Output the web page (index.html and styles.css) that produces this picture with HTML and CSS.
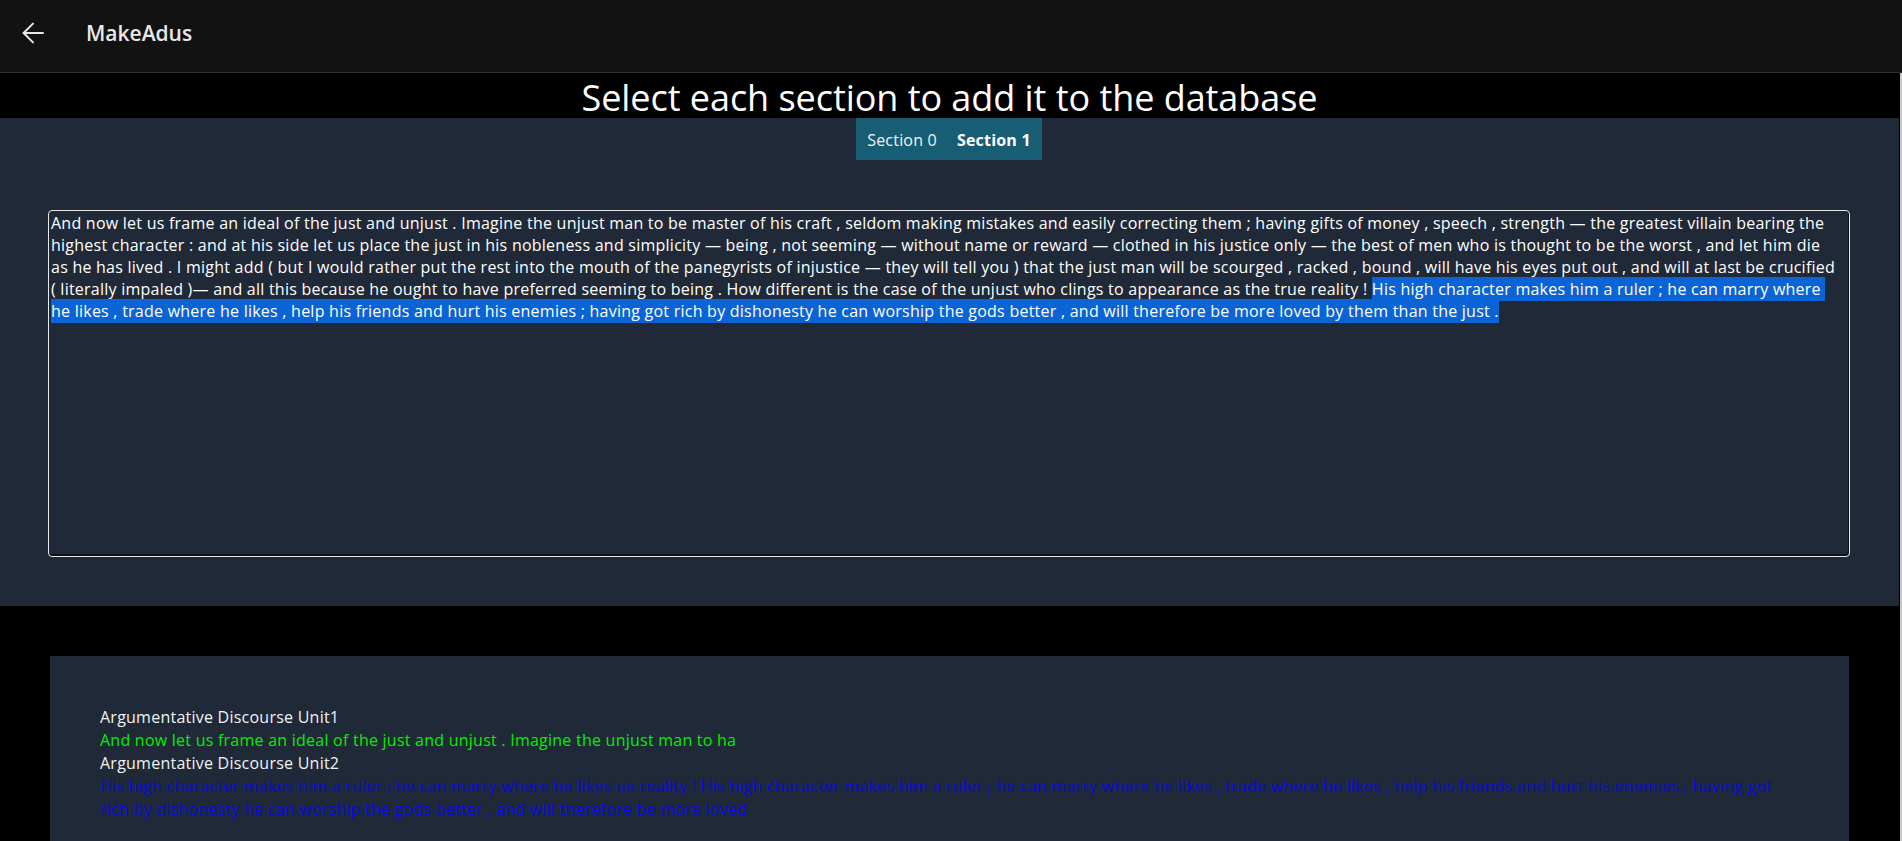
FILE: index.html
```html
<!DOCTYPE html>
<html lang="en">
<head>
<meta charset="utf-8">
<title>MakeAdus</title>
<link rel="stylesheet" href="styles.css">
</head>
<body>
<header class="topbar">
  <span class="back" aria-label="Back">
    <svg width="22" height="22" viewBox="0 0 22 22" fill="none" stroke="currentColor" stroke-width="2" stroke-linecap="round" stroke-linejoin="round"><path d="M21 11H1.6"/><path d="M11 1.6L1.6 11 11 20.4"/></svg>
  </span>
  <span class="brand">MakeAdus</span>
</header>
<div class="body-area">
  <main class="content">
    <h1 class="title">Select each section to add it to the database</h1>
    <section class="panel">
      <div class="tabs">
        <span class="tab">Section 0</span>
        <span class="tab tab-active">Section 1</span>
      </div>
      <div class="editor">And now let us frame an ideal of the just and unjust . Imagine the unjust man to be master of his craft , seldom making mistakes and easily correcting them ; having gifts of money , speech , strength — the greatest villain bearing the<br>highest character : and at his side let us place the just in his nobleness and simplicity — being , not seeming — without name or reward — clothed in his justice only — the best of men who is thought to be the worst , and let him die<br>as he has lived . I might add ( but I would rather put the rest into the mouth of the panegyrists of injustice — they will tell you ) that the just man will be scourged , racked , bound , will have his eyes put out , and will at last be crucified<br>( literally impaled )— and all this because he ought to have preferred seeming to being . How different is the case of the unjust who clings to appearance as the true reality ! <span class="sel">His high character makes him a ruler ; he can marry where&nbsp;<br>he likes , trade where he likes , help his friends and hurt his enemies ; having got rich by dishonesty he can worship the gods better , and will therefore be more loved by them than the just .</span></div>
    </section>
    <section class="units">
      <div class="unit-label">Argumentative Discourse Unit1</div>
      <div class="unit-text unit-green">And now let us frame an ideal of the just and unjust . Imagine the unjust man to ha</div>
      <div class="unit-label">Argumentative Discourse Unit2</div>
      <div class="unit-text unit-blue">His high character makes him a ruler ; he can marry where he likes ue reality ! His high character makes him a ruler ; he can marry where he likes , trade where he likes , help his friends and hurt his enemies ; having got rich by dishonesty he can worship the gods better , and will therefore be more loved</div>
    </section>
  </main>
  <div class="rail"></div>
</div>
</body>
</html>
```

FILE: styles.css
```css
* { box-sizing: border-box; }

html, body {
  margin: 0;
  height: 100%;
  overflow: hidden;
  background: #000;
  font-family: "Open Sans", "Noto Sans", sans-serif;
  color: #fff;
}

.topbar {
  height: 73px;
  background: #121212;
  border-bottom: 1px solid #2e2e2e;
  display: flex;
  align-items: center;
  padding: 0 0 6px 22px;
  color: #e6e6e6;
}

.back {
  display: flex;
  width: 22px;
  height: 22px;
  color: #e8e8e8;
}

.brand {
  margin-left: 42px;
  font-size: 21px;
  font-weight: 600;
  color: #e8e8e8;
}

.body-area {
  display: flex;
  height: calc(100% - 73px);
}

.content {
  flex: 1;
  min-width: 0;
}

.rail {
  width: 2px;
  margin-left: 1px;
  background: #c9c9c9;
}

.title {
  margin: 0;
  height: 45px;
  padding-top: 5px;
  font-size: 36px;
  line-height: 40px;
  font-weight: 400;
  text-align: center;
  color: #fff;
  letter-spacing: -0.05px;
}

.panel {
  background: #1f2937;
  padding: 0 49px 49px 48px;
}

.tabs {
  display: flex;
  justify-content: center;
  margin-bottom: 50px;
}

.tab {
  background: #175e75;
  font-size: 16px;
  line-height: 22px;
  padding: 11px 10px 9px;
  color: #f2f2f2;
  letter-spacing: 0.2px;
}

.tab:first-child { padding-left: 11px; }
.tab:last-child { padding-right: 11px; }

.tab-active { font-weight: 700; color: #fff; }

.editor {
  height: 347px;
  border: 1px solid #e8e8e8;
  border-radius: 4px;
  box-shadow: inset -1px -2px 0 #0e1117;
  padding: 1px 0 1px 2px;
  font-size: 16px;
  line-height: 22px;
  letter-spacing: 0.24px;
  color: #fff;
}

.sel {
  background: #0b64d6;
  padding: 1px 0;
}

.units {
  background: #1f2937;
  margin: 50px 50px 0 50px;
  padding: 50px;
}

.unit-label, .unit-text {
  font-size: 16px;
  line-height: 23px;
  letter-spacing: 0.24px;
}

.unit-label { color: #f2f2f2; }
.unit-green { color: #00f000; }
.unit-blue { color: #0a0ae0; }
```
